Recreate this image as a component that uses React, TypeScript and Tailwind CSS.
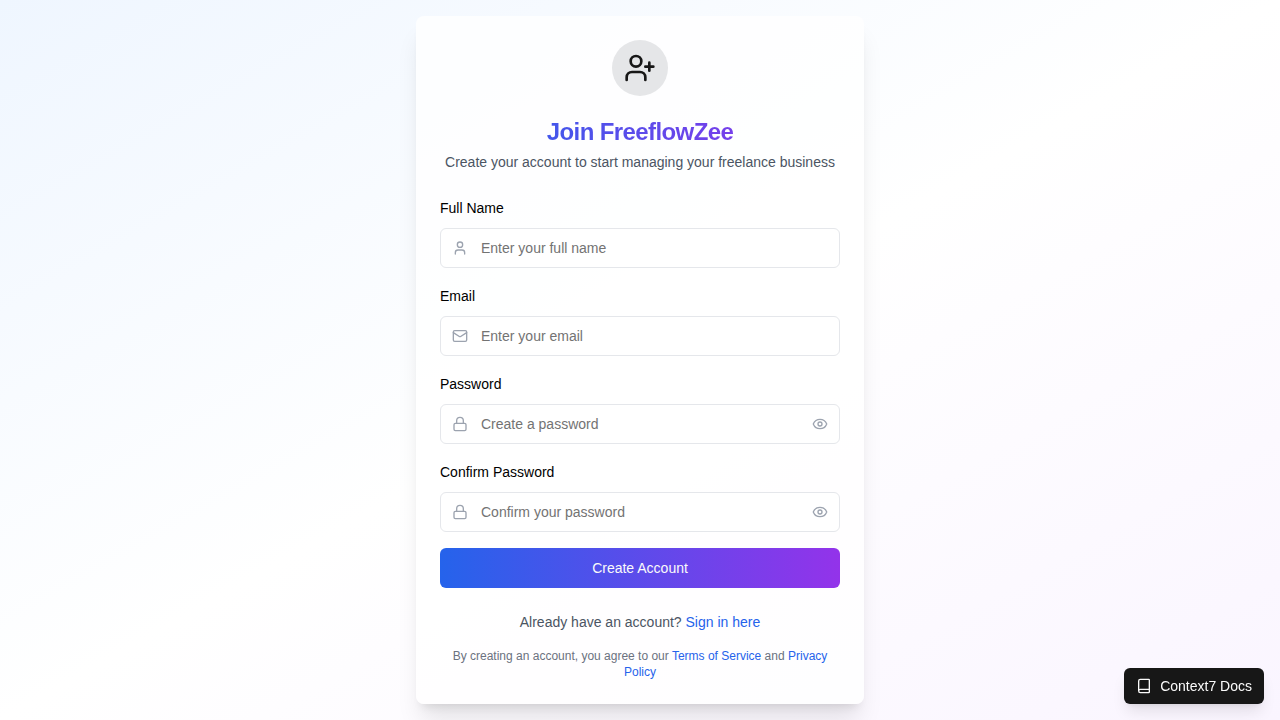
import { useState } from "react";
import { Book, Eye, EyeOff, Lock, Mail, User, UserPlus } from "lucide-react";
import type { LucideIcon } from "lucide-react";

type FieldProps = {
  id: string;
  label: string;
  type: "text" | "email" | "password";
  placeholder: string;
  icon: LucideIcon;
};

function Field({ id, label, type, placeholder, icon: Icon }: FieldProps) {
  const [visible, setVisible] = useState(false);
  const isPassword = type === "password";
  return (
    <div className="flex flex-col gap-2">
      <div className="text-base">
        <label htmlFor={id} className="text-sm font-medium text-black">
          {label}
        </label>
      </div>
      <div className="relative">
        <Icon className="absolute left-3 top-3 h-4 w-4 text-[#9ca3af]" />
        <input
          id={id}
          name={id}
          type={isPassword && visible ? "text" : type}
          placeholder={placeholder}
          className="block h-10 w-full rounded-md border border-[#e5e7eb] bg-white/50 px-10 py-2 text-sm text-black placeholder:text-[#737373]"
        />
        {isPassword && (
          <button
            type="button"
            aria-label={visible ? "Hide password" : "Show password"}
            onClick={() => setVisible(!visible)}
            className="absolute right-3 top-3 text-[#9ca3af]"
          >
            {visible ? <EyeOff className="h-4 w-4" /> : <Eye className="h-4 w-4" />}
          </button>
        )}
      </div>
    </div>
  );
}

export default function App() {
  return (
    <div className="flex min-h-screen items-center justify-center bg-[linear-gradient(to_bottom_right,#eff6ff,#ffffff,#faf5ff)] p-4 font-['Liberation_Sans',Arial,sans-serif] antialiased">
      <main className="w-full max-w-md rounded-lg bg-white/80 shadow-xl">
        <header className="p-6 text-center">
          <div className="mx-auto mb-5 w-fit rounded-full bg-[#e5e6e8] p-3">
            <UserPlus className="h-8 w-8 text-[#171717]" />
          </div>
          <h1 className="bg-[linear-gradient(to_right,#2563eb,#9333ea)] bg-clip-text text-2xl font-bold tracking-tight text-transparent">
            Join FreeflowZee
          </h1>
          <p className="mt-1 text-sm text-[#4b5563]">
            Create your account to start managing your freelance business
          </p>
        </header>
        <div className="px-6 pb-6">
          <form className="space-y-4" onSubmit={(event) => event.preventDefault()}>
            <Field id="fullName" label="Full Name" type="text" placeholder="Enter your full name" icon={User} />
            <Field id="email" label="Email" type="email" placeholder="Enter your email" icon={Mail} />
            <Field id="password" label="Password" type="password" placeholder="Create a password" icon={Lock} />
            <Field id="confirmPassword" label="Confirm Password" type="password" placeholder="Confirm your password" icon={Lock} />
            <button
              type="submit"
              className="block h-10 w-full rounded-md bg-[linear-gradient(to_right,#2563eb,#9333ea)] text-sm font-medium text-[#fafafa]"
            >
              Create Account
            </button>
          </form>
          <p className="mt-6 text-center text-sm text-[#4b5563]">
            Already have an account?{" "}
            <a href="/login" className="font-medium text-[#2563eb]">
              Sign in here
            </a>
          </p>
          <p className="mt-4 text-center text-xs text-[#6b7280]">
            By creating an account, you agree to our{" "}
            <a href="/terms" className="text-[#2563eb]">Terms of Service</a> and{" "}
            <a href="/privacy" className="text-[#2563eb]">Privacy Policy</a>
          </p>
        </div>
      </main>
      <button
        type="button"
        className="fixed bottom-4 right-4 flex h-9 items-center gap-2 rounded-md bg-[#171717] px-3 text-sm font-medium text-[#fafafa] shadow-lg"
      >
        <Book className="h-4 w-4" />
        Context7 Docs
      </button>
    </div>
  );
}
